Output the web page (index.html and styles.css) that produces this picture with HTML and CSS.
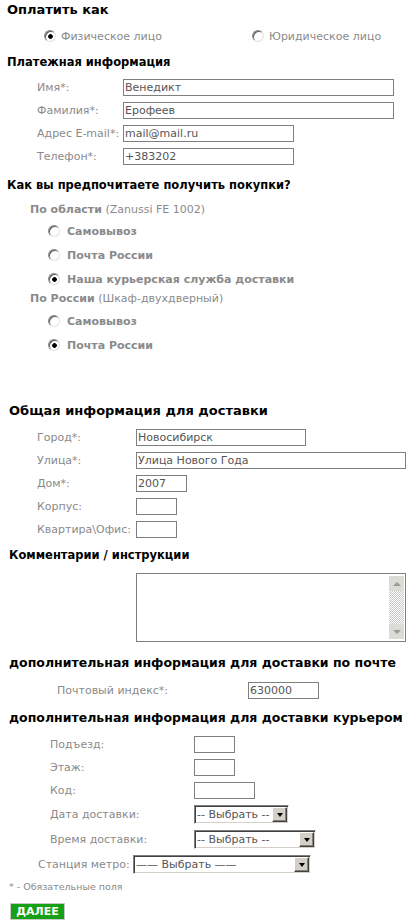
FILE: index.html
```html
<!DOCTYPE html>
<html lang="ru">
<head>
<meta charset="utf-8">
<title>Оформление заказа</title>
<link rel="stylesheet" href="styles.css">
</head>
<body>
<form class="page">
  <h2 class="h h-first">Оплатить как</h2>
  <div class="paytype">
    <label class="opt"><input type="radio" class="rb" name="pay" checked><span>Физическое лицо</span></label>
    <label class="opt"><input type="radio" class="rb" name="pay"><span>Юридическое лицо</span></label>
  </div>

  <h2 class="h h-pay">Платежная информация</h2>
  <div class="fields f-pay">
    <div class="row"><span class="lbl">Имя*:</span><input class="inp w-271" value="Венедикт"></div>
    <div class="row"><span class="lbl">Фамилия*:</span><input class="inp w-271" value="Ерофеев"></div>
    <div class="row"><span class="lbl">Адрес E-mail*:</span><input class="inp w-171" value="mail@mail.ru"></div>
    <div class="row"><span class="lbl">Телефон*:</span><input class="inp w-171" value="+383202"></div>
  </div>

  <h2 class="h h-how">Как вы предпочитаете получить покупки?</h2>
  <div class="group">
    <div class="glabel"><b>По области</b> (Zanussi FE 1002)</div>
    <label class="ropt"><input type="radio" class="rb" name="d1"><span>Самовывоз</span></label>
    <label class="ropt"><input type="radio" class="rb" name="d1"><span>Почта России</span></label>
    <label class="ropt"><input type="radio" class="rb" name="d1" checked><span>Наша курьерская служба доставки</span></label>
    <div class="glabel g2"><b>По России</b> (Шкаф-двухдверный)</div>
    <label class="ropt"><input type="radio" class="rb" name="d2"><span>Самовывоз</span></label>
    <label class="ropt"><input type="radio" class="rb" name="d2" checked><span>Почта России</span></label>
  </div>

  <h2 class="h h-gen">Общая информация для доставки</h2>
  <div class="fields f-gen">
    <div class="row"><span class="lbl">Город*:</span><input class="inp w-170" value="Новосибирск"></div>
    <div class="row"><span class="lbl">Улица*:</span><input class="inp w-270" value="Улица Нового Года"></div>
    <div class="row"><span class="lbl">Дом*:</span><input class="inp w-51" value="2007"></div>
    <div class="row"><span class="lbl">Корпус:</span><input class="inp w-41" value=""></div>
    <div class="row"><span class="lbl">Квартира\Офис:</span><input class="inp w-41" value=""></div>
  </div>

  <h2 class="h h-com">Комментарии / инструкции</h2>
  <div class="tawrap">
    <textarea class="ta"></textarea>
    <div class="sbar">
      <span class="sbtn"><span class="tri tri-up"></span></span>
      <span class="strack"></span>
      <span class="sbtn"><span class="tri tri-down"></span></span>
    </div>
  </div>

  <h2 class="h h-post">дополнительная информация для доставки по почте</h2>
  <div class="fields f-post">
    <div class="row"><span class="lbl">Почтовый индекс*:</span><input class="inp w-71" value="630000"></div>
  </div>

  <h2 class="h h-cour">дополнительная информация для доставки курьером</h2>
  <div class="fields f-cour">
    <div class="row"><span class="lbl">Подъезд:</span><input class="inp w-41" value=""></div>
    <div class="row"><span class="lbl">Этаж:</span><input class="inp w-41" value=""></div>
    <div class="row"><span class="lbl">Код:</span><input class="inp w-61" value=""></div>
    <div class="row row-sel"><span class="lbl">Дата доставки:</span>
      <span class="sel w-95"><select class="selin"><option>-- Выбрать --</option></select><span class="sarrow"><span class="tri tri-black"></span></span></span>
    </div>
    <div class="row row-sel"><span class="lbl">Время доставки:</span>
      <span class="sel w-122"><select class="selin"><option>-- Выбрать --</option></select><span class="sarrow"><span class="tri tri-black"></span></span></span>
    </div>
  </div>
  <div class="fields f-metro">
    <div class="row row-sel"><span class="lbl">Станция метро:</span>
      <span class="sel w-178"><select class="selin"><option>—— Выбрать ——</option></select><span class="sarrow"><span class="tri tri-black"></span></span></span>
    </div>
  </div>

  <p class="note">* - Обязательные поля</p>
  <button type="button" class="next">ДАЛЕЕ</button>
</form>
</body>
</html>
```
FILE: styles.css
```css
html, body {
  margin: 0;
  padding: 0;
  background: #fff;
}
body {
  font-family: "DejaVu Sans", Verdana, sans-serif;
  font-size: 11px;
  color: #8a8a8a;
}
.page {
  display: flex;
  flex-direction: column;
  align-items: flex-start;
  padding: 2px 0 0 0;
}
.h {
  margin: 0;
  height: 16px;
  line-height: 16px;
  font-size: 11.5px;
  font-weight: bold;
  color: #000;
  margin-left: 7px;
  white-space: nowrap;
}
.h-first { margin-top: 0; font-size: 13px; }
.h-pay { margin-top: 10px; }
.h-how { margin-top: 12px; }
.h-gen { margin-top: 46px; margin-left: 9px; font-size: 13px; }
.h-com { margin-top: 9px; margin-left: 9px; }
.h-post { margin-top: 13px; margin-left: 9px; font-size: 12.5px; }
.h-cour { margin-top: 11px; margin-left: 9px; font-size: 12.5px; }

/* radios */
.rb {
  -webkit-appearance: none;
  appearance: none;
  box-sizing: border-box;
  width: 12px;
  height: 12px;
  margin: 0;
  border-radius: 50%;
  border: 1px solid;
  border-color: #8a8a8a #e4e2dc #e4e2dc #8a8a8a;
  box-shadow: inset 1px 1px 0 #5a5a5a;
  background: #fff;
  flex: none;
}
.rb:checked {
  background: radial-gradient(circle at 55% 55%, #000 0 2px, #fff 2.6px);
}

.paytype {
  display: grid;
  grid-template-columns: 208px auto;
  margin-top: 10px;
  padding-left: 44px;
  height: 16px;
  align-items: center;
}
.opt {
  display: flex;
  align-items: center;
  gap: 5px;
  color: #8a8a8a;
}

.fields {
  display: flex;
  flex-direction: column;
  gap: 6px;
}
.row {
  display: flex;
  align-items: center;
  height: 17px;
}
.row-sel { height: 19px; }
.lbl { flex: none; white-space: nowrap; }

.f-pay { margin-top: 9px; padding-left: 37px; }
.f-pay .lbl { width: 86px; }
.f-gen { margin-top: 10px; padding-left: 37px; }
.f-gen .lbl { width: 99px; }
.f-post { margin-top: 11px; padding-left: 57px; }
.f-post .lbl { width: 191px; }
.f-cour { margin-top: 10px; padding-left: 50px; }
.f-cour .lbl { width: 144px; }
.f-metro { margin-top: 6px; padding-left: 38px; }
.f-metro .lbl { width: 95px; }

.inp {
  box-sizing: border-box;
  height: 17px;
  margin: 0;
  padding: 0 1px;
  border: 1px solid #7f7f7f;
  font-family: inherit;
  font-size: 11px;
  color: #555;
  background: #fff;
  outline: none;
}
.w-271 { width: 271px; }
.w-171 { width: 171px; }
.w-170 { width: 170px; }
.w-270 { width: 270px; }
.w-51 { width: 51px; }
.w-41 { width: 41px; }
.w-61 { width: 61px; }
.w-71 { width: 71px; }
.w-95 { width: 95px; }
.w-122 { width: 122px; }
.w-178 { width: 178px; }

/* delivery groups */
.group {
  display: flex;
  flex-direction: column;
  margin-top: 9px;
}
.glabel {
  height: 16px;
  line-height: 16px;
  padding-left: 30px;
}
.glabel b { font-weight: bold; }
.ropt {
  display: flex;
  align-items: center;
  gap: 7px;
  height: 24px;
  padding-left: 48px;
  font-weight: bold;
  color: #8a8a8a;
}
.group .glabel:first-child { margin-bottom: 1px; }
.g2 { margin-bottom: 2px; }

/* textarea */
.tawrap {
  display: flex;
  box-sizing: border-box;
  width: 270px;
  height: 69px;
  margin-top: 10px;
  margin-left: 136px;
  border: 1px solid #7f7f7f;
  padding: 2px 0 2px 0;
}
.ta {
  flex: 1;
  border: 0;
  resize: none;
  outline: none;
  padding: 0;
  margin: 0;
  font-family: inherit;
  font-size: 11px;
}
.sbar {
  display: flex;
  flex-direction: column;
  width: 15px;
  margin-right: 1px;
}
.sbtn {
  display: flex;
  align-items: center;
  justify-content: center;
  height: 15px;
  background: #dcdcd6;
  flex: none;
}
.strack {
  flex: 1;
  background-color: #fff;
  background-image: repeating-conic-gradient(#c8c8c8 0 25%, #fff 0 50%);
  background-size: 2px 2px;
}
.tri {
  width: 0;
  height: 0;
  border-left: 4px solid transparent;
  border-right: 4px solid transparent;
}
.tri-up { border-bottom: 4px solid #9a9a9a; }
.tri-down { border-top: 4px solid #9a9a9a; }
.tri-black { border-top: 4px solid #000; border-left-width: 3.5px; border-right-width: 3.5px; }

/* selects */
.sel {
  display: flex;
  box-sizing: border-box;
  height: 19px;
  border: 1px solid;
  border-color: #808080 #ffffff #ffffff #808080;
  box-shadow: inset 1px 1px 0 #404040, inset -1px -1px 0 #d4d0c8;
  padding: 1px;
  background: #fff;
}
.selin {
  -webkit-appearance: none;
  appearance: none;
  flex: 1;
  min-width: 0;
  border: 0;
  margin: 0;
  padding: 0 0 0 1px;
  background: #fff;
  font-family: inherit;
  font-size: 11px;
  color: #555;
  outline: none;
  height: 15px;
  line-height: 15px;
}
.sarrow {
  box-sizing: border-box;
  display: flex;
  align-items: center;
  justify-content: center;
  width: 15px;
  height: 15px;
  background: #d4d0c8;
  border: 1px solid;
  border-color: #ffffff #404040 #404040 #ffffff;
  box-shadow: inset -1px -1px 0 #808080;
  flex: none;
}

.note {
  margin: 7px 0 0 9px;
  font-size: 9.5px;
  line-height: 12px;
  height: 12px;
}
.next {
  margin: 10px 0 0 10px;
  box-sizing: border-box;
  width: 55px;
  height: 17px;
  padding: 0;
  border: 1px solid #c8c8c8;
  background: #16a016;
  color: #fff;
  font-family: inherit;
  font-weight: bold;
  font-size: 11px;
  line-height: 15px;
  cursor: pointer;
}
```
